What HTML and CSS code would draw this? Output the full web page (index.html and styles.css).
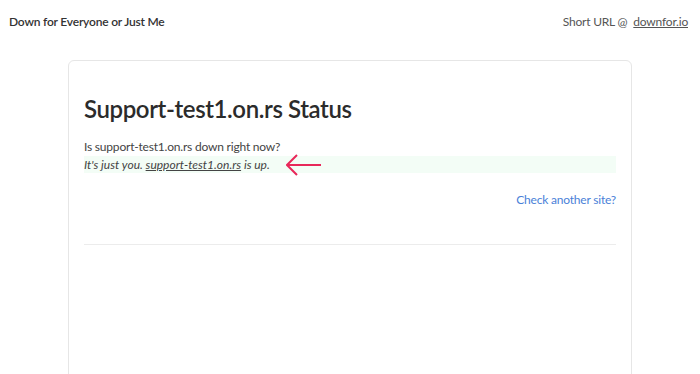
FILE: index.html
```html
<!DOCTYPE html>
<html lang="en">
<head>
    <meta charset="UTF-8">
    <title>Support-test1.on.rs Status</title>
    <link rel="stylesheet" href="styles.css">
</head>
<body>

    <header class="topbar">
        <a class="brand" href="#">Down for Everyone or Just Me</a>
        <div class="short-url">Short URL @ <a href="#">downfor.io</a></div>
    </header>

    <main class="card">
        <h1>Support-test1.on.rs Status</h1>

        <p class="question">Is support-test1.on.rs down right now?</p>
        <div class="answer">
            <span class="answer-text">It's just you. <a href="#">support-test1.on.rs</a> is up.</span>
            <svg class="arrow" width="36" height="22" viewBox="0 0 36 22">
                <path d="M35 11 H2 M11 1 L1 11 L11 21" fill="none" stroke="#e8285a" stroke-width="2"/>
            </svg>
        </div>

        <div class="again">
            <a href="#">Check another site?</a>
        </div>

        <hr>
    </main>

</body>
</html>
```

FILE: styles.css
```css
body {
    margin: 0;
    font-family: 'Lato', sans-serif;
    font-size: 12px;
    letter-spacing: -0.2px;
    color: #444;
    background: #fff;
}

a {
    color: inherit;
}

.topbar {
    display: flex;
    justify-content: space-between;
    align-items: center;
    height: 42px;
    padding: 0 12px 0 9px;
}

.brand {
    text-decoration: none;
    color: #333;
    font-weight: 600;
}

.short-url {
    color: #555;
}

.short-url a {
    margin-left: 3px;
}

.card {
    margin: 18px 68px 0 68px;
    width: 532px;
    min-height: 400px;
    padding: 30px 15px 0 15px;
    border: 1px solid #e6e6e6;
    border-radius: 6px;
}

h1 {
    margin: 3px 0 15px;
    font-size: 24px;
    letter-spacing: -0.4px;
    font-weight: 600;
    color: #2b2b2b;
}

.question {
    margin: 0;
    line-height: 18px;
}

.answer {
    display: flex;
    align-items: center;
    height: 17px;
    background: #f3fdf6;
    font-style: italic;
    letter-spacing: 0;
}

.arrow {
    margin-left: 16px;
}

.again {
    margin-top: 19px;
    text-align: right;
}

.again a {
    color: #4a7fd8;
    text-decoration: none;
}

hr {
    margin: 37px 0 0;
    border: 0;
    border-top: 1px solid #ececec;
}
```
